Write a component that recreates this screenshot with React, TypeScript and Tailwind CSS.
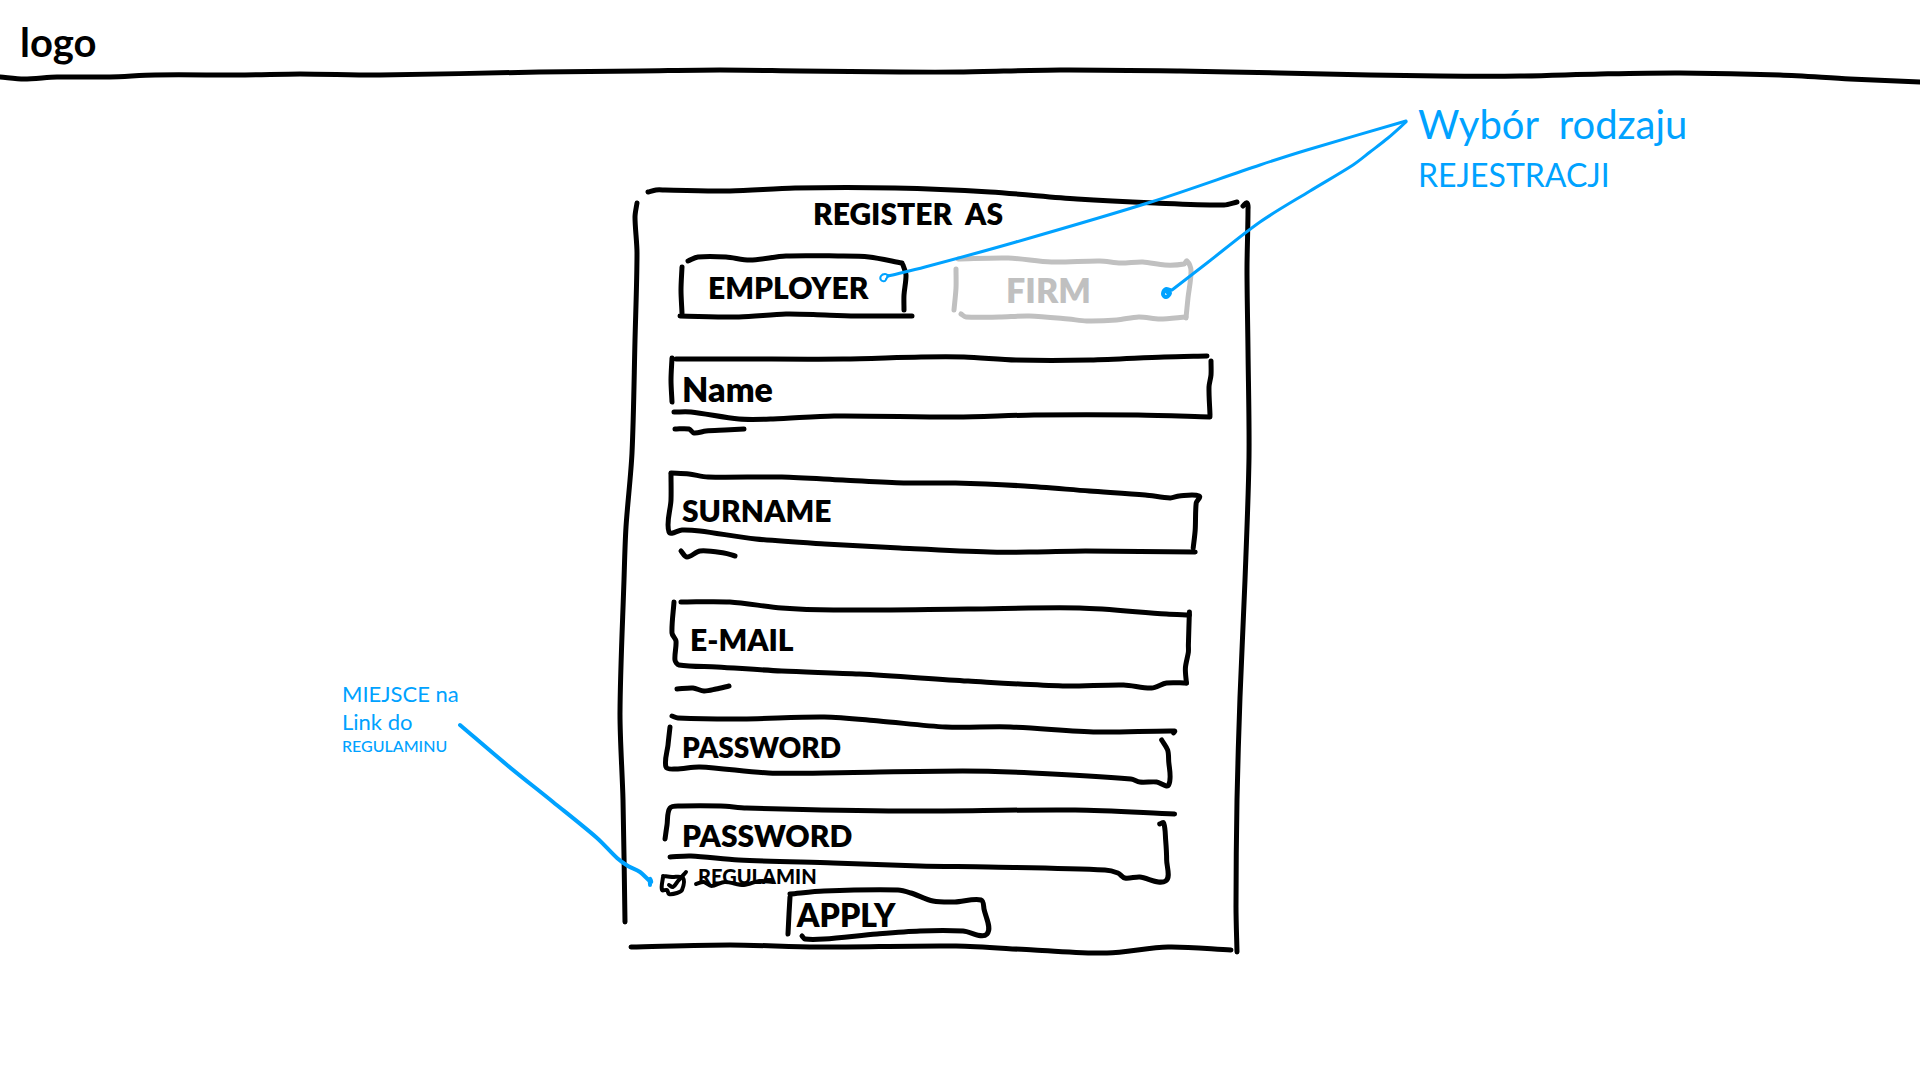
import React, { useState } from "react";

type Pt = [number, number];

/** Turns "x,y x,y …" into a smooth pen stroke that passes through every point. */
function smooth(points: string): string {
  const p = points.split(" ").map((s) => s.split(",").map(Number) as Pt);
  let d = `M${p[0][0]} ${p[0][1]}`;
  for (let i = 0; i < p.length - 1; i++) {
    const a = p[i - 1] ?? p[i];
    const b = p[i];
    const c = p[i + 1];
    const e = p[i + 2] ?? c;
    const k = (Math.hypot(c[0] - b[0], c[1] - b[1]) / 6) * 1.8;
    const l1 = Math.hypot(c[0] - a[0], c[1] - a[1]) || 1;
    const l2 = Math.hypot(e[0] - b[0], e[1] - b[1]) || 1;
    const x1 = b[0] + ((c[0] - a[0]) / l1) * k;
    const y1 = b[1] + ((c[1] - a[1]) / l1) * k;
    const x2 = c[0] - ((e[0] - b[0]) / l2) * k;
    const y2 = c[1] - ((e[1] - b[1]) / l2) * k;
    d += `C${x1} ${y1} ${x2} ${y2} ${c[0]} ${c[1]}`;
  }
  return d;
}

type SketchProps = { box: string; strokes: string[]; width?: number; className: string };

/** Hand-drawn strokes that stretch with the element that holds them. */
function Sketch({ box, strokes, width = 5, className }: SketchProps) {
  return (
    <svg viewBox={box} preserveAspectRatio="none" aria-hidden="true" className={`pointer-events-none overflow-visible ${className}`}>
      {strokes.map((s) => (
        <path
          key={s}
          d={smooth(s)}
          fill="none"
          stroke="currentColor"
          strokeWidth={width}
          strokeLinecap="round"
          strokeLinejoin="round"
          vectorEffect="non-scaling-stroke"
        />
      ))}
    </svg>
  );
}

const FRAME = "absolute inset-0 h-full w-full";

const headerLine = [
  "0,77 24,79 57,77 110,77 155,75 245,75 300,74 380,75 539,72 640,71 720,70 800,71 900,72 960,72 1060,70 1180,71 1280,73 1370,75 1440,76 1520,76 1600,74 1680,73 1780,75 1850,79 1920,82",
];

const cardFrame = [
  "648,192 656,190 665,190 730,191 795,188 895,188 990,192 1077,199 1155,203 1224,205 1237,202",
  "637,203 635,217 637,253 635,340 632,453 626,527 624,580 620,713 623,800 625,922",
  "1243,206 1247,203 1248,210 1247,270 1248,350 1249,457 1245,580 1240,697 1237,800 1236,907 1237,952",
  "631,947 730,945 817,947 956,946 1034,950 1107,953 1168,947 1231,950",
];

const employerFrame = [
  "688,261 698,257 726,257 750,260 786,256 838,256 869,257 902,263",
  "682,267 681,290 682,313",
  "680,316 739,317 786,314 825,315 860,316 912,316",
  "903,265 906,275 904,295 904,310",
];

const firmFrame = [
  "958,261 1008,260 1051,264 1099,263 1120,265 1142,264 1164,267 1183,266 1186,263 1190,273 1187,300 1185,320",
  "956,271 956,290 954,312",
  "961,316 966,319 999,319 1029,318 1068,321 1086,323 1116,322 1138,319 1159,321 1185,319",
];

type FieldProps = {
  id: string;
  label: string;
  type: string;
  box: string;
  strokes: string[];
  size: string;
  hintBox?: string;
  hint?: string;
};

const fields: FieldProps[] = [
  {
    id: "name",
    label: "Name",
    type: "text",
    box: "670 358 540 60",
    size: "mt-10 h-[60px] w-full pl-3 text-[34px]",
    strokes: [
      "676,359 739,359 843,359 921,357 964,357 1016,360 1090,360 1164,357 1207,356",
      "672,358 671,380 672,402",
      "674,412 691,412 739,419 773,419 834,416 956,417 1034,415 1138,415 1210,417",
      "1211,361 1211,375 1209,387 1210,415",
    ],
    hintBox: "670 426 80 8",
    hint: "675,429 689,429 694,433 706,431 725,430 744,429",
  },
  {
    id: "surname",
    label: "SURNAME",
    type: "text",
    box: "670 474 530 68",
    size: "mt-10 h-[68px] w-[98%] pt-1 pl-3 text-3xl",
    strokes: [
      "671,473 689,474 708,477 782,477 843,480 904,483 956,483 1025,486 1090,491 1146,495 1171,498 1180,496 1200,496 1197,503 1196,530 1194,548",
      "671,474 671,500 669,532 682,530 700,531 756,539 825,544 900,548 990,552 1034,552 1086,551 1196,552",
    ],
    hintBox: "670 550 80 8",
    hint: "681,551 687,557 700,551 724,553 735,556",
  },
  {
    id: "email",
    label: "E-MAIL",
    type: "email",
    box: "670 602 520 74",
    size: "mt-11 h-[74px] w-[96%] pl-5 text-3xl",
    strokes: [
      "674,602 672,633 676,641 675,660 679,665 717,667 782,671 860,674 969,681 1064,686 1125,685 1153,688 1168,683 1188,683",
      "681,602 730,602 782,608 834,610 969,609 1081,608 1168,614 1191,615",
      "1191,612 1190,645 1190,652 1187,668 1188,683",
    ],
    hintBox: "670 684 80 8",
    hint: "677,689 693,688 704,691 716,689 729,686",
  },
  {
    id: "password",
    label: "PASSWORD",
    type: "password",
    box: "670 718 510 54",
    size: "mt-[26px] h-[54px] w-[94%] pt-1 pl-3 text-[28px]",
    strokes: [
      "672,716 678,718 743,719 825,717 880,721 947,727 1012,727 1099,732 1177,731 1176,733",
      "670,727 668,745 666,767 676,769 700,767 769,773 825,773 964,771 1034,773 1133,779 1142,782 1159,782 1171,785 1171,760 1170,750 1164,740",
    ],
  },
  {
    id: "password-repeat",
    label: "PASSWORD",
    type: "password",
    box: "670 808 510 54",
    size: "mt-9 h-[54px] w-[94%] pl-3 text-3xl",
    strokes: [
      "665,839 667,825 670,808 682,806 721,806 747,808 904,811 1077,810 1177,814",
      "670,857 691,856 739,860 834,863 921,866 990,867 1107,870 1120,873 1127,878 1142,877 1168,881 1169,860 1168,840 1166,823 1162,824",
    ],
  },
];

const applyFrame = [
  "791,895 790,912 789,932",
  "791,892 825,889 899,888 912,891 934,899 956,900 982,898 985,907 988,932 964,929 921,929 878,932 825,937 806,937 803,934",
];

const leaders = [
  "1406,121 1307,150 1260,165 1151,202 1016,242 925,267 888,276",
  "1406,122 1388,138 1370,152 1353,165 1310,191 1260,222 1207,263 1172,290",
];

function Field({ id, label, type, box, strokes, size, hintBox, hint }: FieldProps) {
  return (
    <>
      <div className={`relative flex items-center gap-3 pr-4 font-extrabold ${size}`}>
        <Sketch box={box} strokes={strokes} className={FRAME} />
        <label htmlFor={id}>{label}</label>
        <input id={id} type={type} className="h-full min-w-0 flex-1 bg-transparent text-2xl outline-none" />
      </div>
      {hint && hintBox && <Sketch box={hintBox} strokes={[hint]} className="mt-2 h-2 w-20" />}
    </>
  );
}

export default function App() {
  const [kind, setKind] = useState("employer");
  const tone = (k: string) => (kind === k ? "text-black" : "text-[#c0c0c0]");

  return (
    <div className="min-h-screen bg-white font-['Lato',sans-serif] text-black">
      <header className="relative flex h-20 items-center pt-1 pl-5">
        <a href="#home" className="text-[40px] leading-none font-bold">
          logo
        </a>
        <Sketch box="0 0 1920 80" strokes={headerLine} className={FRAME} />
      </header>

      <main className="relative grid grid-cols-[62fr_63fr_67fr]">
        <aside className="flex justify-end pt-[600px] pr-[148px] text-[#00a2ff]">
          <p className="w-[130px] text-[22px] leading-7">
            MIEJSCE na
            <br />
            Link do
            <span className="block text-base leading-5 font-medium">REGULAMINU</span>
          </p>
        </aside>

        <form className="relative mt-[107px] mb-[126px] flex flex-col pt-2 pr-10 pb-[18px] pl-[50px]" onSubmit={(e) => e.preventDefault()}>
          <Sketch box="620 187 630 767" strokes={cardFrame} className={FRAME} />

          <h1 className="pr-16 text-center text-3xl leading-9 font-extrabold">
            REGISTER&nbsp; AS
          </h1>

          <div className="mt-[25px] grid grid-cols-[228fr_235fr] gap-[47px] pr-5 pl-[10px] font-extrabold">
            <button
              type="button"
              aria-pressed={kind === "employer"}
              onClick={() => setKind("employer")}
              className={`relative h-[62px] min-w-0 pl-7 text-left text-3xl ${tone("employer")}`}
            >
              <Sketch box="680 256 228 62" strokes={employerFrame} className={FRAME} />
              EMPLOYER
            </button>
            <button
              type="button"
              aria-pressed={kind === "firm"}
              onClick={() => setKind("firm")}
              className={`relative h-[62px] min-w-0 pt-1 pr-12 text-center text-[34px] ${tone("firm")}`}
            >
              <Sketch box="955 258 234 62" strokes={firmFrame} className={FRAME} />
              FIRM
            </button>
          </div>

          {fields.map((f) => (
            <Field key={f.id} {...f} />
          ))}

          <div className="mt-1 flex h-7 items-start gap-4">
            <span className="relative -ml-2 h-5 w-5 self-end">
              <input
                id="terms"
                type="checkbox"
                defaultChecked
                aria-labelledby="terms-link"
                className="peer absolute inset-0 h-full w-full appearance-none"
              />
              <Sketch
                box="662 876 20 20"
                strokes={["663,879 662,892 667,892 669,896 677,895 682,892 683,880 672,879 663,878"]}
                width={4}
                className={FRAME}
              />
              <Sketch
                box="662 876 20 20"
                strokes={["669,887 673,889 678,883 686,874"]}
                width={4}
                className={`${FRAME} invisible peer-checked:visible`}
              />
            </span>
            <a id="terms-link" href="#regulamin" className="relative text-xl leading-5 font-black">
              REGULAMIN
              <Sketch
                box="699 867 124 20"
                strokes={["697,885 705,883 713,887 727,883 747,886 763,882 777,883"]}
                width={4}
                className={FRAME}
              />
            </a>
          </div>

          <button type="submit" className="relative ml-[22%] h-[42px] w-[198px] pl-2 text-left text-[32px] leading-10 font-extrabold">
            <Sketch box="790 892 198 42" strokes={applyFrame} className={FRAME} />
            APPLY
          </button>
        </form>

        <aside className="flex pt-5 pl-[168px] text-[#00a2ff]">
          <p className="text-[40px] leading-[48px]">
            Wybór&nbsp; rodzaju
            <br />
            <span className="text-[32px]">REJESTRACJI</span>
          </p>
        </aside>

        <div className="pointer-events-none absolute inset-0 text-[#00a2ff]">
          <Sketch box="0 80 1920 1000" strokes={leaders} width={3} className={FRAME} />
          <Sketch
            box="0 80 1920 1000"
            strokes={["888,275 885,281 881,280 881,276 885,274 888,276 886,279"]}
            width={2}
            className={FRAME}
          />
          <Sketch
            box="0 80 1920 1000"
            strokes={[
              "1170,290 1166,289 1163,294 1166,297 1170,293 1167,292",
              "460,725 507,765 553,802 597,838 617,858 628,866 640,872 651,882 650,879 650,885",
            ]}
            width={4}
            className={FRAME}
          />
        </div>
      </main>
    </div>
  );
}
